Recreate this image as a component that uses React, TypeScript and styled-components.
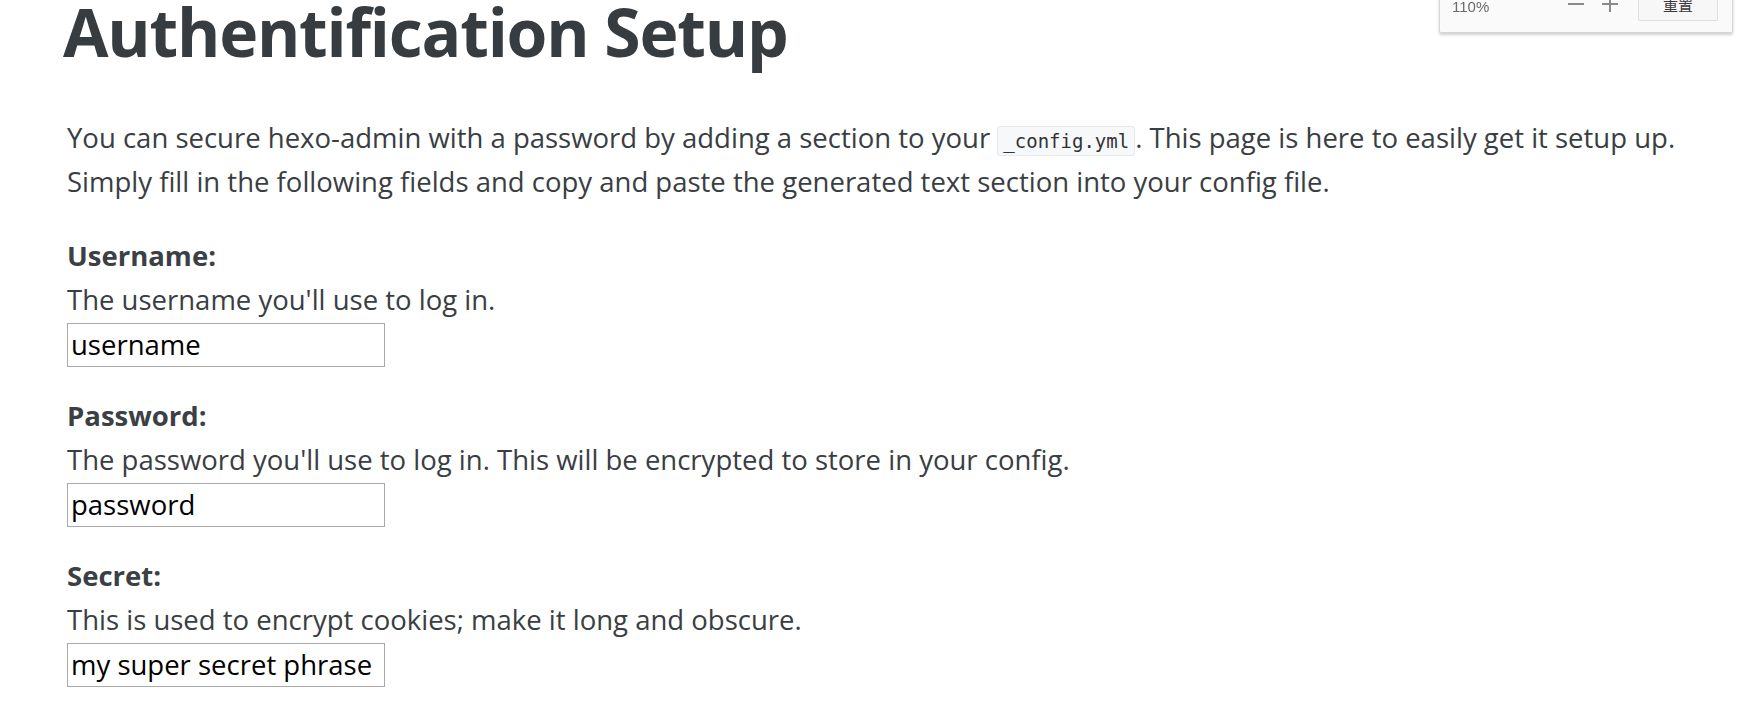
import React from 'react';
import styled, {createGlobalStyle} from 'styled-components';

const GlobalStyle = createGlobalStyle`
  html, body {
    margin: 0;
    padding: 0;
    background: #fff;
  }

  body {
    font-family: "Open Sans", "Noto Sans", sans-serif;
    color: #393e43;
    overflow: hidden;
  }
`;

const Page = styled.div`
  padding: 0 40px 0 67px;
`;

const Title = styled.h1`
  margin: -5px 0 48px -4px;
  font-size: 66px;
  font-weight: 700;
  line-height: 1.1;
  letter-spacing: -1.2px;
  color: #363c40;
`;

const Intro = styled.p`
  margin: 0 0 30px;
  font-size: 27.5px;
  line-height: 44px;
`;

const Code = styled.code`
  font-family: "DejaVu Sans Mono", "Liberation Mono", monospace;
  font-size: 19px;
  line-height: 1;
  color: #333;
  padding: 3px 5px;
  background: #f6f8fa;
  border: 1px solid #e4e9ee;
  border-radius: 3px;
`;

const Field = styled.div`
  margin-bottom: 27px;
  font-size: 27.5px;
  line-height: 44px;
`;

const Label = styled.label`
  display: block;
  font-weight: 700;
  color: #3b4044;
`;

const Hint = styled.div`
  color: #393e43;
`;

const Input = styled.input`
  display: block;
  box-sizing: border-box;
  width: 318px;
  height: 44px;
  margin: 1px 0 0;
  padding: 1px 3px;
  border: 1px solid #a9a9a9;
  border-radius: 0;
  font-family: "Open Sans", "Noto Sans", sans-serif;
  font-size: 27.5px;
  color: #000;
  background: #fff;
  outline: none;
`;

// browser zoom bubble sitting over the top right corner
const ZoomBubble = styled.div`
  position: fixed;
  top: -20px;
  right: 11px;
  box-sizing: border-box;
  width: 294px;
  height: 53px;
  padding: 6px 14px 0 12px;
  display: flex;
  align-items: flex-start;
  background: #fafafa;
  border: 1px solid #d6d6d6;
  border-radius: 2px;
  box-shadow: 0 2px 3px rgba(0, 0, 0, 0.18);
`;

const ZoomRow = styled.div`
  display: flex;
  align-items: center;
  height: 34px;
  width: 100%;
`;

const ZoomValue = styled.span`
  font-family: "Liberation Sans", Arial, sans-serif;
  font-size: 15px;
  color: #6b6b6b;
  flex: 1;
  padding-top: 5px;
`;

const ZoomStep = styled.button<{$gap: number}>`
  display: flex;
  align-items: center;
  justify-content: center;
  width: 16px;
  height: 16px;
  padding: 0;
  margin-right: ${p => p.$gap}px;
  background: none;
  border: none;
`;

const ResetButton = styled.button`
  box-sizing: border-box;
  width: 80px;
  height: 34px;
  padding: 0;
  font-family: "Noto Sans CJK SC", sans-serif;
  font-size: 15px;
  font-weight: 400;
  color: #3a3a3a;
  background: #f7f7f7;
  border: 1px solid #dedede;
  border-radius: 2px;
`;

const fields = [
  {id: 'username', label: 'Username:', hint: "The username you'll use to log in.", value: 'username'},
  {id: 'password', label: 'Password:', hint: "The password you'll use to log in. This will be encrypted to store in your config.", value: 'password'},
  {id: 'secret', label: 'Secret:', hint: 'This is used to encrypt cookies; make it long and obscure.', value: 'my super secret phrase'},
];

export default function App() {
  return (
    <>
      <GlobalStyle />
      <Page>
        <Title>Authentification Setup</Title>
        <Intro>
          You can secure hexo-admin with a password by adding a section to your <Code>_config.yml</Code>. This page is here to easily get it setup up.
          <br />
          Simply fill in the following fields and copy and paste the generated text section into your config file.
        </Intro>
        {fields.map(f => (
          <Field key={f.id}>
            <Label htmlFor={f.id}>{f.label}</Label>
            <Hint>{f.hint}</Hint>
            <Input id={f.id} type="text" defaultValue={f.value} />
          </Field>
        ))}
      </Page>

      <ZoomBubble>
        <ZoomRow>
          <ZoomValue>110%</ZoomValue>
          <ZoomStep $gap={18} aria-label="zoom out">
            <svg width="16" height="16" viewBox="0 0 16 16">
              <path d="M0 8h16" stroke="#8a8a8a" strokeWidth="2" />
            </svg>
          </ZoomStep>
          <ZoomStep $gap={20} aria-label="zoom in">
            <svg width="16" height="16" viewBox="0 0 16 16">
              <path d="M0 8h16M8 0v16" stroke="#8a8a8a" strokeWidth="2" />
            </svg>
          </ZoomStep>
          <ResetButton>重置</ResetButton>
        </ZoomRow>
      </ZoomBubble>
    </>
  );
}
